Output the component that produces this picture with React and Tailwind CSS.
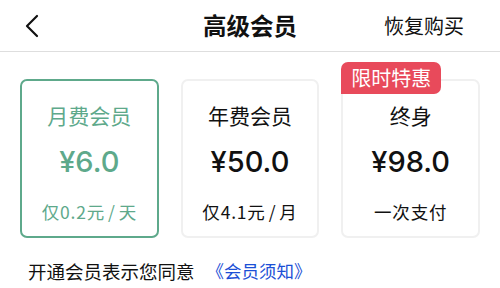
import React from 'react';

const plans = [
  { title: '月费会员', price: '¥6.0', note: ['仅0.2元', '天'], active: true },
  { title: '年费会员', price: '¥50.0', note: ['仅4.1元', '月'] },
  { title: '终身', price: '¥98.0', note: ['一次支付'], badge: '限时特惠' },
];

const PlanCard = ({ title, price, note, active, badge }) => (
  <div className="relative">
    {badge && (
      <div className="absolute -top-[17px] left-0 h-[32px] w-[100px] bg-[#e84a5b] text-white text-[20px] leading-[32px] text-center rounded-t-[7px] rounded-br-[7px] z-10">
        {badge}
      </div>
    )}
    <div
      className={
        active
          ? 'h-[159px] flex flex-col items-center rounded-[7px] border-2 border-[#5ea98b] text-[#5ea98b]'
          : 'h-[159px] flex flex-col items-center rounded-[7px] border-2 border-[#f0f0f0] text-[#111]'
      }
    >
      <div className="mt-[20px] text-[21px] leading-[28px]">{title}</div>
      <div className="mt-[15px] text-[29px] leading-[36px] font-medium font-['Inter',sans-serif]">{price}</div>
      <div className="mt-[20px] text-[17.5px] leading-[24px] tracking-[0.8px]">
        {note[0]}
        {note[1] && (
          <>
            <span className="mx-[3px]">/</span>
            {note[1]}
          </>
        )}
      </div>
    </div>
  </div>
);

export default function App() {
  return (
    <div className="w-[500px] h-[288px] bg-white overflow-hidden font-['Noto_Sans_CJK_SC','Noto_Sans',sans-serif]">
      <div className="h-[52px] grid grid-cols-[1fr_auto_1fr] items-center border-b border-[#dedede] pl-[24px] pr-[36px]">
        <svg width="16" height="24" viewBox="0 0 16 24" fill="none">
          <path d="M13 2 L3 12 L13 22" stroke="#111" strokeWidth="2.2" strokeLinecap="round" strokeLinejoin="round" />
        </svg>
        <div className="text-[23.5px] text-[#111] font-bold ml-[12px]">高级会员</div>
        <div className="text-[20px] text-[#111] text-right">恢复购买</div>
      </div>
      <div className="grid grid-cols-3 gap-[22px] px-[20px] pt-[27px]">
        {plans.map((p) => (
          <PlanCard key={p.title} {...p} />
        ))}
      </div>
      <div className="flex items-center pl-[28px] pt-[20px] text-[18.5px] leading-[26px]">
        <span className="text-[#111]">开通会员表示您同意</span>
        <span className="ml-[12px] text-[#1b4fd6] text-[17.5px]">《会员须知》</span>
      </div>
    </div>
  );
}
